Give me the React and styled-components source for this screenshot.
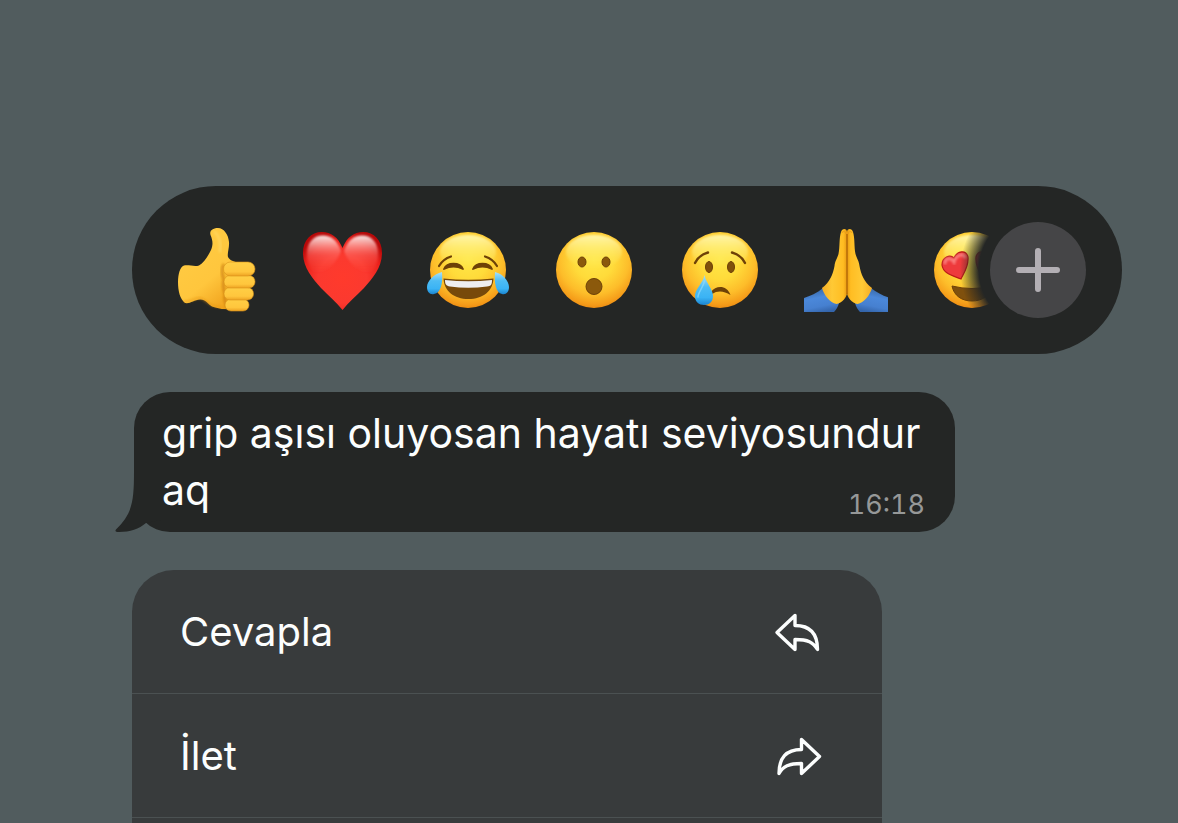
import React from 'react';
import styled, { createGlobalStyle } from 'styled-components';

const GlobalStyle = createGlobalStyle`
    * {
        box-sizing: border-box;
    }
    body {
        margin: 0;
        background: #515c5e;
        font-family: Inter, 'Liberation Sans', sans-serif;
        -webkit-font-smoothing: antialiased;
    }
    button {
        font: inherit;
        color: inherit;
        border: 0;
        padding: 0;
        background: none;
        cursor: pointer;
    }
`;

const Page = styled.main`
    display: flex;
    flex-direction: column;
    align-items: flex-start;
    gap: 38px;
    min-height: 100vh;
    padding: 186px 56px 0 132px;
    color: #fcfefe;
    font-size: 40px;
`;

const ReactionBar = styled.div`
    display: flex;
    align-items: center;
    width: 100%;
    height: 168px;
    padding: 0 36px 0 42px;
    border-radius: 84px;
    background: #242625;
`;

const ReactionList = styled.div`
    display: flex;
    flex: 1;
    gap: 42px;
    min-width: 0;
    overflow: hidden;
`;

const Reaction = styled.button`
    flex: 0 0 84px;
    height: 84px;

    svg {
        display: block;
        width: 84px;
        height: 84px;
    }
`;

const AddButton = styled.button`
    position: relative;
    flex: 0 0 96px;
    height: 96px;
    border-radius: 50%;

    /* fades out the reaction that runs under the button */
    &::before {
        content: '';
        position: absolute;
        inset: -30px;
        border-radius: 50%;
        background: radial-gradient(circle closest-side, #242625 59px, rgba(36, 38, 37, 0) 78px);
    }

    svg {
        position: relative;
        display: block;
    }
`;

const Bubble = styled.div`
    position: relative;
    width: 100%;
    max-width: 821px;
    margin-left: 2px;
    padding: 13px 30px 13px 28px;
    border-radius: 36px;
    background: #242625;
    font-size: 41px;
    line-height: 57px;
`;

const Tail = styled.svg`
    position: absolute;
    left: -19px;
    bottom: 0;
    fill: #242625;
`;

const Message = styled.span`
    color: #fcfefe;
`;

const Time = styled.time`
    float: right;
    margin-top: 28px;
    font-size: 27px;
    line-height: 29px;
    font-variant-numeric: tabular-nums;
    color: #969898;
`;

const Menu = styled.div`
    flex: 1;
    width: 100%;
    max-width: 750px;
    border-radius: 42px 42px 0 0;
    background: #383b3c;
`;

const MenuItem = styled.button`
    display: flex;
    align-items: center;
    justify-content: space-between;
    width: 100%;
    height: 124px;
    padding: 0 60px 0 48px;
    border-bottom: 1px solid #4b5152;
    text-align: left;
`;

const BROWN = '#6e4107';

const Defs = () => (
    <svg width="0" height="0" style={{ position: 'absolute' }} aria-hidden="true">
        <defs>
            <radialGradient id="face" cx="0.5" cy="0.36" r="0.66">
                <stop offset="0" stopColor="#ffe748" />
                <stop offset="0.4" stopColor="#ffdb3a" />
                <stop offset="0.7" stopColor="#fdbd2a" />
                <stop offset="0.9" stopColor="#f59c19" />
                <stop offset="1" stopColor="#e98711" />
            </radialGradient>
            <linearGradient id="shine" x1="0" y1="0" x2="0" y2="1">
                <stop offset="0" stopColor="#fff9b8" stopOpacity="0.9" />
                <stop offset="1" stopColor="#ffee5c" stopOpacity="0" />
            </linearGradient>
            <linearGradient id="tear" x1="0" y1="0" x2="0" y2="1">
                <stop offset="0" stopColor="#a8e2fa" />
                <stop offset="0.4" stopColor="#4dbcf4" />
                <stop offset="0.75" stopColor="#3ab3f5" />
                <stop offset="1" stopColor="#1b84cf" />
            </linearGradient>
            <radialGradient id="heart" cx="0.5" cy="0.6" r="0.62">
                <stop offset="0" stopColor="#ff3a2c" />
                <stop offset="0.5" stopColor="#fb392f" />
                <stop offset="0.8" stopColor="#ea211b" />
                <stop offset="1" stopColor="#b80808" />
            </radialGradient>
            <linearGradient id="gloss" x1="0" y1="0" x2="0" y2="1">
                <stop offset="0" stopColor="#fff" stopOpacity="0.9" />
                <stop offset="0.2" stopColor="#ffc9c5" stopOpacity="0.75" />
                <stop offset="0.5" stopColor="#ff8079" stopOpacity="0.4" />
                <stop offset="1" stopColor="#ff4a3c" stopOpacity="0" />
            </linearGradient>
            <linearGradient id="hand" x1="0" y1="0" x2="0.6" y2="1">
                <stop offset="0" stopColor="#ffcd45" />
                <stop offset="0.7" stopColor="#ffc63d" />
                <stop offset="1" stopColor="#f3a822" />
            </linearGradient>
            <linearGradient id="finger" x1="0" y1="0" x2="0" y2="1">
                <stop offset="0" stopColor="#ffcf45" />
                <stop offset="0.7" stopColor="#ffc63d" />
                <stop offset="1" stopColor="#eda222" />
            </linearGradient>
            <linearGradient id="palm" x1="0" y1="0" x2="1" y2="0">
                <stop offset="0" stopColor="#f5ad25" />
                <stop offset="0.4" stopColor="#ffc935" />
                <stop offset="0.85" stopColor="#ffbd22" />
                <stop offset="1" stopColor="#e89a12" />
            </linearGradient>
            <linearGradient id="sleeve" x1="0.3" y1="0" x2="0.6" y2="1">
                <stop offset="0" stopColor="#35639f" />
                <stop offset="0.4" stopColor="#4b88da" />
                <stop offset="0.75" stopColor="#4680d0" />
                <stop offset="1" stopColor="#3465ab" />
            </linearGradient>
            <filter id="soft" x="-20%" y="-20%" width="140%" height="140%">
                <feGaussianBlur stdDeviation="1" />
            </filter>
        </defs>
    </svg>
);

const Face = ({ children }) => (
    <svg viewBox="0 0 84 84">
        <circle cx="42" cy="42" r="38" fill="url(#face)" />
        <ellipse cx="42" cy="24" rx="28" ry="17" fill="url(#shine)" filter="url(#soft)" />
        {children}
    </svg>
);

const ThumbsUp = () => (
    <svg viewBox="0 0 84 84">
        <path
            d="M10 37.500C15 36.500 20 39 25 37.500C30 35 34 28 37 22C39.500 16 38.500 12 36.500 7C35 2 40 0 44 0C50 0 54.500 7 55 14C55.500 20 53 25 54 29C56 33 60 33 64 35L58 80C52 82 45 81 38 78.500C34 76 31 71 26 71.500C20 72 16 76 11 75C6 71 4 63 4 54C4 46 6 39 10 37.500Z"
            fill="url(#hand)"
        />
        <path d="M10 73C15 75 20 70 26 70C32 71 33 77 42 78.500L54 80" fill="none" stroke="#e3920f" strokeWidth="2" opacity="0.5" filter="url(#soft)" />
        <path d="M50 36C46 42 49 49 50 52C48 58 50 62 51 66C50 72 52 77 53 80" fill="none" stroke="#c87a08" strokeWidth="3" opacity="0.65" filter="url(#soft)" />
        <rect x="51" y="71" width="24" height="12" rx="6" fill="url(#finger)" stroke="#d9921a" strokeWidth="0.600" />
        <rect x="50" y="59.500" width="29.500" height="12.500" rx="6" fill="url(#finger)" stroke="#d9921a" strokeWidth="0.600" />
        <rect x="50" y="47.500" width="31" height="12.500" rx="6" fill="url(#finger)" stroke="#d9921a" strokeWidth="0.600" />
        <rect x="49.500" y="34" width="31.500" height="14" rx="7" fill="url(#finger)" stroke="#d9921a" strokeWidth="0.600" />
        <path d="M41 4C45 8 47 15 46 23" fill="none" stroke="#ffd968" strokeWidth="3" strokeLinecap="round" opacity="0.6" filter="url(#soft)" />
    </svg>
);

const Heart = () => (
    <svg viewBox="0 0 84 84">
        <path d="M42.500 20C38 9 31 4 22 4C11 4 3 12 3 25C3 39 12 50 21 60C29 68 36 74 42.500 82C49 74 56 68 64 60C73 50 82 39 82 25C82 12 74 4 63 4C54 4 47 9 42.500 20Z" fill="url(#heart)" />
        <path d="M41 23C37 12 31 7.500 23 7.500C13 7.500 7 15 7 26C7 34 10 40 15 46C27 44 36 36 41 23Z" fill="url(#gloss)" filter="url(#soft)" />
        <path d="M44 23C48 12 54 7.500 62 7.500C72 7.500 78 15 78 26C78 34 75 40 70 46C58 44 49 36 44 23Z" fill="url(#gloss)" filter="url(#soft)" />
    </svg>
);

const Joy = () => (
    <Face>
        <path d="M13 38Q17 31 25 28.500M71 38Q67 31 59 28.500" fill="none" stroke={BROWN} strokeWidth="2.200" strokeLinecap="round" />
        <path d="M18 41C21 34 34 34 37 41C31 38 24 38 18 41ZM47 41C50 34 63 34 66 41C60 38 53 38 47 41Z" fill={BROWN} stroke={BROWN} strokeWidth="1.800" strokeLinejoin="round" />
        <path d="M17.500 50.500Q42 53 67.500 50.500C67 63 57 71 42.500 71C28 71 18 63 17.500 50.500Z" fill="#77490a" />
        <path d="M19 52Q42 54.500 66 52C66 57 65 58 61 58.500Q42 61 24 58.500C20 58 19 56 19 52Z" fill="#eeeef0" />
        <path d="M16 44C8 46 1 53 1 59C1 64 4 67 8 66C15 65 17 55 16 44Z" fill="url(#tear)" />
        <path d="M69 44C77 46 83 53 83 59C83 64 80 67 76 66C70 65 68 55 69 44Z" fill="url(#tear)" />
    </Face>
);

const Wow = () => (
    <Face>
        <ellipse cx="30" cy="34" rx="4" ry="5" fill="#8b590c" stroke={BROWN} />
        <ellipse cx="54" cy="34" rx="4" ry="5" fill="#8b590c" stroke={BROWN} />
        <circle cx="42" cy="58.500" r="8" fill="#8b590c" stroke={BROWN} />
    </Face>
);

const Cry = () => (
    <Face>
        <path d="M17 35Q21 27 30 24.500M67 35Q63 27 54 24.500" fill="none" stroke={BROWN} strokeWidth="2.400" strokeLinecap="round" />
        <ellipse cx="31" cy="39" rx="3.500" ry="5.500" fill="#80500b" stroke={BROWN} />
        <ellipse cx="53" cy="39" rx="3.500" ry="5.500" fill="#80500b" stroke={BROWN} />
        <path d="M33 64C38 57 49 57 52.500 67C46 63 40 62 34 66Z" fill={BROWN} />
        <path d="M26.500 47C28 55 35 61 35 68C35 74 31 77 26 77C21 77 17 74 17 68C17 61 25 55 26.500 47Z" fill="url(#tear)" />
        <path d="M26.500 53C25 60 20 64 20 69" fill="none" stroke="#8fd8fa" strokeWidth="1.500" strokeLinecap="round" opacity="0.7" />
    </Face>
);

const PrayHalf = () => (
    <>
        <path d="M0 70C6 68 13 65 19 60L35 75C34 79 32 82 30 84H0Z" fill="url(#sleeve)" />
        <path
            d="M43 4C43 0 38 0 37 4C35 10 36 19 34.500 26C33 31 31 33 30.500 38C29 46 26 54 18 60C20 67 26 75 32.500 76C38 75 43 69 43 65Z"
            fill="url(#palm)"
        />
        <path d="M38 5C38 3 42 3 42 6" fill="none" stroke="#e79a1d" strokeWidth="1" />
    </>
);

const Pray = () => (
    <svg viewBox="0 0 84 84">
        <PrayHalf />
        <g transform="matrix(-1 0 0 1 86 0)">
            <PrayHalf />
        </g>
        <path d="M43 6V66" stroke="#a85f05" strokeWidth="1.200" />
    </svg>
);

const HeartEyes = () => (
    <Face>
        <path d="M24 30C27 23 36 21 38 29C39 38 34 45 31 51C24 48 13 46 12 37C12 29 20 26 24 30Z" fill="#ee3a3c" stroke="#bb1b17" strokeWidth="1.200" />
        <path d="M15 35C15 30 21 29 24 34C26 27 33 25 35 29" fill="none" stroke="#ff9b98" strokeWidth="3" strokeLinecap="round" opacity="0.7" filter="url(#soft)" />
        <path d="M60 30C57 23 48 21 46 29C45 38 50 45 53 51C60 48 71 46 72 37C72 29 64 26 60 30Z" fill="#ee3a3c" stroke="#bb1b17" strokeWidth="1.200" />
        <path d="M22 58Q42 63 62 58C60 68 52 73 42 73C32 73 24 68 22 58Z" fill="#7f500d" stroke={BROWN} />
    </Face>
);

const PlusIcon = () => (
    <svg width="96" height="96" viewBox="0 0 96 96" fill="none" stroke="#b3afb4" strokeWidth="6" strokeLinecap="round">
        <circle cx="48" cy="48" r="48" fill="#454547" stroke="none" />
        <path d="M48 29V67M29 48H67" />
    </svg>
);

const arrowProps = {
    width: 48,
    height: 48,
    viewBox: '0 0 48 48',
    fill: 'none',
    stroke: 'currentColor',
    strokeWidth: 3.4,
    strokeLinejoin: 'round',
};

const ReplyIcon = () => (
    <svg {...arrowProps}>
        <path d="M3 24.500L21 7.500V17.500C36 17.500 43.500 26 43.500 41.500C39 34 34 31.500 21 31.500V41.500Z" />
    </svg>
);

const ForwardIcon = () => (
    <svg {...arrowProps}>
        <path d="M45.500 24.500L27.500 7.500V17.500C12 17.500 5 26 5 41.500C9 34 15 31.500 27.500 31.500V41.500Z" />
    </svg>
);

const reactions = [
    { name: 'Beğen', Icon: ThumbsUp },
    { name: 'Kalp', Icon: Heart },
    { name: 'Gülen yüz', Icon: Joy },
    { name: 'Şaşkın yüz', Icon: Wow },
    { name: 'Üzgün yüz', Icon: Cry },
    { name: 'Teşekkür', Icon: Pray },
    { name: 'Aşık yüz', Icon: HeartEyes },
];

const App = () => {
    return (
        <>
            <GlobalStyle />
            <Page>
                <Defs />
                <ReactionBar>
                    <ReactionList>
                        {reactions.map(({ name, Icon }) => (
                            <Reaction key={name} type="button" aria-label={name}>
                                <Icon />
                            </Reaction>
                        ))}
                    </ReactionList>
                    <AddButton type="button" aria-label="Daha fazla">
                        <PlusIcon />
                    </AddButton>
                </ReactionBar>

                <Bubble>
                    <Tail width="50" height="60" viewBox="0 0 50 60">
                        <path d="M19 0C19 30 17 42 1 57.500Q-1 60 4 60C15 60 24 57 31 51L46 48V0Z" />
                    </Tail>
                    <Message>grip aşısı oluyosan hayatı seviyosundur aq</Message>
                    <Time>16:18</Time>
                </Bubble>

                <Menu>
                    <MenuItem type="button">
                        Cevapla
                        <ReplyIcon />
                    </MenuItem>
                    <MenuItem type="button">
                        İlet
                        <ForwardIcon />
                    </MenuItem>
                </Menu>
            </Page>
        </>
    );
};

export default App;
